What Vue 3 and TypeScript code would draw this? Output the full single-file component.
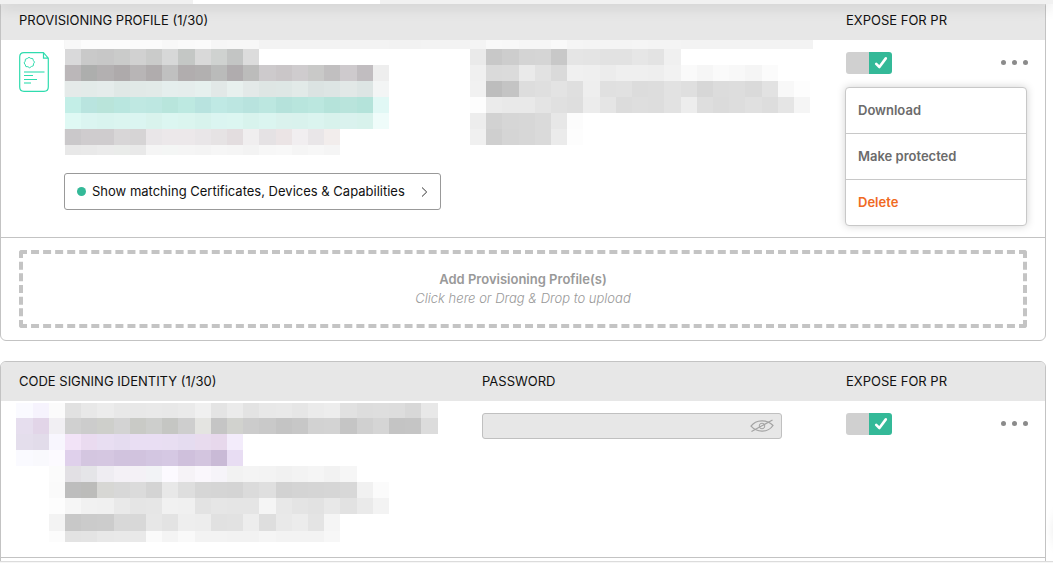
<script setup lang="ts">
import { ref } from 'vue'

interface Tile {
  x: number
  y: number
  w: number
  h: number
  fill: string
}

interface TileRow {
  row: number
  col: number
  fills: string
}

const PITCH = 16.2

// Each entry lists its tile colours from left to right; two-digit codes are greys.
function buildTiles(rows: TileRow[], tops: number[], origin: number): Tile[] {
  const edge = (col: number) => Math.max(0, Math.round(origin + col * PITCH))
  return rows.flatMap(({ row, col, fills }) =>
    fills.split(' ').map((code, n) => {
      const x = edge(col + n)
      return {
        x,
        y: tops[row],
        w: edge(col + n + 1) - x,
        h: tops[row + 1] - tops[row],
        fill: '#' + (code.length === 2 ? code.repeat(3) : code),
      }
    }),
  )
}

const profileTiles = buildTiles(
  [
    { row: 0, col: -1, fills: 'f6 f8 fc fc fc fb fb f8 fa fb f6 f7 f7 f3 f3 f3 f3 f3 f3 f3 f3 f2 f2 f3 f3 f3 f4 f9 f8 f6 f6 f9 f5 f4 f4 f4 f5 f4 f4 f3 f3 f3 f3 f3 f3 f3 f3 f3' },
    { row: 1, col: 0, fills: 'd9d9da c9 c7 cacbca d1 cacbca d7d8d8 c4c7c5 d9 cfd2d0 c3c5c4 dc' },
    { row: 1, col: 25, fills: 'ea c8 cd d4 d5 c8 e5 e4 e2 e2 e6 e3 f0' },
    { row: 2, col: -1, fills: 'f3f5f5 bbb7b9 adaead b3b0b1 aeaaab b8b5b6 b0acad c0 b1adae b2b0b0 babbba b0acae bcbcbb cdcacc cac6c8 cfccce c9c9c8 c1bfc0 cecacd c1bdc0 ee' },
    { row: 2, col: 25, fills: 'f0 da db ea e2 da f0 ef ec ef ef ee f2 fa f6 fa f8 f5 fb' },
    { row: 3, col: -1, fills: 'f4f8f7 e5eae9 e3ebe9 e5eceb e0e8e6 e1e9e7 e2eae8 e5eeed e5edec e6f0ee e2e8e7 e8f0ee e3e9e8 dee6e4 dee7e5 e2eae8 dbe3e2 dde5e4 e2e8e7 dde5e4 f3f5f5' },
    { row: 3, col: 25, fills: 'f1 bd c4 dd df e3 df ee e0 e1 dc dd e2 df d7 dc dd da e2 f8 fd' },
    { row: 4, col: 0, fills: 'c3eee7 b9e4df b9e4da b9e6df bfe8e2 bde7e1 b8e5dc bde9e1 b8e3df bfe9e4 bce6e1 b8e3de bce7e0 b5e2db b8e5dd bbe7df b5e3da b9e4dc b4e3da e1f8f5' },
    { row: 4, col: 25, fills: 'fd eb e9 e9 e4 e0 de ec e5 dc de dd e2 ed de db dd e0 dd e5 f5' },
    { row: 5, col: 0, fills: 'dff9f4 dbf5f1 d9f4ef dbf5f0 dbf5f1 d9f3ed dcf6f1 dbf5ef d8f3ed dbf5f1 dcf6f1 d8f3ed dbf5f0 daf2ed d9f2ed dbf4ef d8f2ec daf2ee d8f2ec effcfa' },
    { row: 5, col: 25, fills: 'ed d2 d6 d7 da e7 fc' },
    { row: 6, col: -1, fills: 'f7f6f6 cac8ca cfccce cfccce d8d6d7 d6d4d5 e9e6e8 ece8ea ece8ea e9e6e8 e6e3e4 e3dddf f0eeef e5e2e4 ebe4e5 f1eef0 e9e6e8 f2edec' },
    { row: 6, col: 25, fills: 'f0 cf d5 d7 da eb fd' },
    { row: 7, col: 0, fills: 'e8 e9 eb eaecea e9 f5 f4f6f5 f5 f4 f6 f5 f3 f7 f8 f5 f7 f5' },
  ],
  [0, 9, 25, 41, 57, 73, 89, 105, 115],
  1,
)

const identityTiles = buildTiles(
  [
    { row: 0, col: 0, fills: 'fafaff f6f3fd fb e1 e8 ec e8 e8 e9 e8 ea f0 e4 eb e3 e8 e9 e6 eb ed e1 dd de dd d8 e8' },
    { row: 1, col: 0, fills: 'e6deee e2d5e8 f1eff3 d0 cc cecfcb d3 c9cac6 cdcecc c5c6c3 ce e4e4e1 c5 d1d2ce cc c9 c4 c7 d2 d3 c5 d0 d5 c4 c5 dc' },
    { row: 2, col: 0, fills: 'e4deec e2dcea f8f6fe f2e3f7 eadbf0 e8def2 e5dcf0 e9def3 e9def3 e8def2 e5dcf0 e8dbee e7d8ec f3ecfb' },
    { row: 3, col: 0, fills: 'fafaff f9f9fd fcfaff dfd0eb d4c6e0 d5c7e1 d1c3de d1c3de d3c6e1 d5c8e3 cfc0dc d3c5df c9bad6 e8ddf3' },
    { row: 4, col: 2, fills: 'fb e2e0e4 e5e5e8 efedf2 f4f1f6 f4f1f6 f2f3f6 fcfaff f6f3f7 faf7fc f6f4f9 f2 f4 f3 f1 f3 f5 f2 f6' },
    { row: 5, col: 2, fills: 'fa bd bcbcba d7d7d4 d8 db d4 e8 de d6 d5 d4 db df d2 d4 d5 d6 d8 f1 fb' },
    { row: 6, col: 2, fills: 'fd f6 f1 f0 e9 e5 e6 f1 f0 e3 e6 e5 e5 f5 e8 e4 e2 e8 e2 ea f3' },
    { row: 7, col: 2, fills: 'f3 c8 cb cc d8 d8 e7 e3 ee ed e1 e2 ed de e9 ec e4 f5' },
    { row: 8, col: 2, fills: 'fc e3 e4 e8 e9 e9 fa f4 f9 f3 f3 f2 f2 f5 f3 f3 f3 f7' },
  ],
  [0, 15, 31, 47, 63, 79, 95, 111, 128, 139],
  0.4,
)

const exposeProfile = ref(true)
const exposeIdentity = ref(true)
const password = ref('')
</script>

<template>
  <div class="page">
    <div class="topbar"><span class="tab"></span></div>

    <main>
      <section class="card">
        <table>
          <colgroup>
            <col /><col class="mid" /><col class="expose" /><col class="actions" />
          </colgroup>
          <thead>
            <tr>
              <th scope="col" colspan="2">PROVISIONING PROFILE (1/30)</th>
              <th scope="col" colspan="2">EXPOSE FOR PR</th>
            </tr>
          </thead>
          <tbody>
            <tr class="profile-row">
              <td colspan="2">
                <div class="profile">
                  <svg class="doc" width="30" height="40" viewBox="0 0 30 40" fill="none" stroke="#2fdcae" aria-hidden="true">
                    <path d="M24.5.7H5Q.7.7.7 5V35Q.7 39.3 5 39.3H25Q29.3 39.3 29.3 35V6.2L24.5.7V6.2H29.3" stroke-width="1.2" />
                    <path d="M10 5.3l1.7 1.1 2 .1.6 1.9 1.2 1.7-1 1.7-.2 2-1.9.7-1.7 1.3-1.8-1.1-2-.1-.7-1.9-1.1-1.8 1.1-1.7.2-2 1.9-.7z" />
                    <path d="M5 20H25.5" stroke-width="2" stroke-opacity=".55" />
                    <path d="M5 23.5H14M5 27.5H18" />
                    <path d="M5 31H12" stroke-width="2" stroke-opacity=".55" />
                  </svg>
                  <div class="details">
                    <svg class="mosaic" width="749" height="115" shape-rendering="crispEdges" aria-hidden="true">
                      <rect v-for="(t, i) in profileTiles" :key="i" :x="t.x" :y="t.y" :width="t.w" :height="t.h" :fill="t.fill" />
                    </svg>
                    <button type="button" class="matching">
                      <span class="status"></span>
                      Show matching Certificates, Devices &amp; Capabilities
                      <svg width="7" height="12" viewBox="0 0 7 12" fill="none" stroke="#333" aria-hidden="true">
                        <path d="M1 1.5 5.7 6 1 10.5" />
                      </svg>
                    </button>
                  </div>
                </div>
              </td>
              <td>
                <label class="toggle">
                  <input v-model="exposeProfile" type="checkbox" aria-label="Expose for PR" />
                  <svg v-if="exposeProfile" width="14" height="14" viewBox="0 0 14 14" fill="none" stroke="#fff" stroke-width="2.6" aria-hidden="true">
                    <path d="M2.2 7.8 5.4 11 11.8 2.4" stroke-linecap="round" stroke-linejoin="round" />
                  </svg>
                </label>
              </td>
              <td class="more-cell">
                <button type="button" class="more" aria-label="More actions" aria-expanded="true">
                  <i></i><i></i><i></i>
                </button>
                <div class="menu" role="menu">
                  <button type="button" role="menuitem">Download</button>
                  <button type="button" role="menuitem">Make protected</button>
                  <button type="button" role="menuitem" class="danger">Delete</button>
                </div>
              </td>
            </tr>
          </tbody>
        </table>
        <div class="upload">
          <button type="button" class="dropzone">
            <strong>Add Provisioning Profile(s)</strong>
            <em>Click here or Drag &amp; Drop to upload</em>
          </button>
        </div>
      </section>

      <section class="card">
        <table>
          <colgroup>
            <col /><col class="mid" /><col class="expose" /><col class="actions" />
          </colgroup>
          <thead>
            <tr>
              <th scope="col">CODE SIGNING IDENTITY (1/30)</th>
              <th scope="col"><label for="identity-password">PASSWORD</label></th>
              <th scope="col" colspan="2">EXPOSE FOR PR</th>
            </tr>
          </thead>
          <tbody>
            <tr class="identity-row">
              <td class="identity">
                <svg class="mosaic" width="422" height="139" shape-rendering="crispEdges" aria-hidden="true">
                  <rect v-for="(t, i) in identityTiles" :key="i" :x="t.x" :y="t.y" :width="t.w" :height="t.h" :fill="t.fill" />
                </svg>
              </td>
              <td>
                <div class="password">
                  <input id="identity-password" v-model="password" type="password" />
                  <button type="button" aria-label="Show password">
                    <svg width="24" height="14" viewBox="0 0 24 14" fill="none" stroke="#a3a3a3" stroke-width="1.2" aria-hidden="true">
                      <path d="M1 7.2C6 .2 17 .2 23 6.5C18 13.8 7 13.8 1 7.2Z" />
                      <circle cx="12" cy="7" r="2.8" stroke-width="1" />
                      <path d="M1.5 12.5 22.5 1" />
                    </svg>
                  </button>
                </div>
              </td>
              <td>
                <label class="toggle">
                  <input v-model="exposeIdentity" type="checkbox" aria-label="Expose for PR" />
                  <svg v-if="exposeIdentity" width="14" height="14" viewBox="0 0 14 14" fill="none" stroke="#fff" stroke-width="2.6" aria-hidden="true">
                    <path d="M2.2 7.8 5.4 11 11.8 2.4" stroke-linecap="round" stroke-linejoin="round" />
                  </svg>
                </label>
              </td>
              <td class="more-cell">
                <button type="button" class="more" aria-label="More actions">
                  <i></i><i></i><i></i>
                </button>
              </td>
            </tr>
          </tbody>
        </table>
        <div class="upload next"></div>
      </section>
    </main>

    <div class="bubble"></div>
    <div class="bottombar"></div>
  </div>
</template>

<style>
body {
  background: #fff;
}
</style>

<style scoped>
.page {
  height: 100vh;
  overflow: hidden;
  position: relative;
  font-family: Inter, "Liberation Sans", sans-serif;
  font-size: 13px;
  line-height: 19px;
  color: #111;
}
.page * {
  box-sizing: border-box;
}
button {
  font: inherit;
  color: inherit;
  background: none;
  border: 0;
  padding: 0;
  cursor: pointer;
}
.topbar {
  position: absolute;
  z-index: 3;
  top: 0;
  left: 0;
  right: 0;
  height: 4px;
  padding-left: 193px;
  background: #f1f1f1;
  box-shadow: 0 0 16px rgba(0, 0, 0, 0.3);
}
.tab {
  display: block;
  width: 187px;
  height: 4px;
  background: #fff;
}
main {
  display: flex;
  flex-direction: column;
  gap: 20px;
  padding-right: 7px;
}
.card {
  border: 1px solid #c3c3c3;
  border-radius: 6px;
}
table {
  width: 100%;
  table-layout: fixed;
  border-collapse: separate;
  border-spacing: 0;
}
.mid {
  width: 364px;
}
.expose {
  width: 135px;
}
.actions {
  width: 82px;
}
th {
  height: 39px;
  padding: 0 0 0 18px;
  background: #e7e7e7;
  font-weight: 400;
  text-align: left;
}
th:first-child {
  border-top-left-radius: 5px;
}
th:last-child {
  border-top-right-radius: 5px;
}
td {
  padding: 12px 0 0 18px;
  vertical-align: top;
}
.profile-row td {
  height: 197px;
}
.identity-row td {
  height: 156px;
}
.profile-row td:first-child {
  padding-top: 0;
}
.profile {
  display: flex;
  gap: 15px;
}
.doc {
  flex: none;
  margin-top: 12px;
}
.details {
  display: flex;
  flex-direction: column;
  align-items: flex-start;
  gap: 18px;
  min-width: 0;
}
.mosaic {
  display: block;
}
.matching {
  display: flex;
  align-items: center;
  gap: 6px;
  min-width: 377px;
  height: 37px;
  padding: 0 12px;
  border: 1px solid #999;
  border-radius: 3px;
  background: #fff;
  white-space: nowrap;
}
.matching svg {
  margin-left: auto;
}
.status {
  width: 9px;
  height: 9px;
  border-radius: 50%;
  background: #34b998;
}
.toggle {
  display: block;
  position: relative;
  width: 46px;
  height: 22px;
}
.toggle input {
  appearance: none;
  display: block;
  width: 46px;
  height: 22px;
  margin: 0;
  border-radius: 3px;
  background: linear-gradient(to right, #34b998 50%, #d0d0d0 50%);
}
.toggle input:checked {
  background: linear-gradient(to right, #d0d0d0 50%, #34b998 50%);
}
.toggle svg {
  position: absolute;
  right: 4px;
  top: 4px;
  pointer-events: none;
}
.more-cell {
  position: relative;
  padding-right: 17px;
}
.more {
  display: flex;
  align-items: center;
  gap: 6px;
  height: 21px;
  margin-left: auto;
}
.more i {
  width: 5px;
  height: 5px;
  border-radius: 50%;
  background: #8b8b8b;
}
.menu {
  position: absolute;
  z-index: 2;
  top: 47px;
  right: 18px;
  width: 182px;
  border: 1px solid #c8c8c8;
  border-radius: 4px;
  background: #fff;
  box-shadow: 0 0 8px rgba(0, 0, 0, 0.18);
}
.menu button {
  display: block;
  width: 100%;
  height: 45px;
  padding: 0 12px;
  text-align: left;
  font-weight: 600;
  color: #6b6b6b;
}
.menu button + button {
  height: 46px;
  border-top: 1px solid #c8c8c8;
}
.menu .danger {
  color: #f06a22;
}
.upload {
  padding: 12px 18px;
  border-top: 1px solid #c3c3c3;
}
.next {
  min-height: 60px;
}
.dropzone {
  display: flex;
  flex-direction: column;
  align-items: center;
  justify-content: center;
  width: 100%;
  height: 78px;
  border: 4px dashed #c4c4c4;
  border-radius: 3px;
  color: #999;
}
.dropzone strong {
  font-weight: 600;
}
.dropzone em {
  font-weight: 300;
}
.identity-row .identity {
  padding: 2px 0 0 15px;
}
.password {
  display: flex;
  align-items: center;
  width: 300px;
  height: 26px;
  padding-right: 7px;
  border: 1px solid #c0c0c0;
  border-radius: 3px;
  background: #e7e7e7;
}
.password input {
  flex: 1;
  min-width: 0;
  height: 24px;
  padding: 0 8px;
  border: 0;
  outline: 0;
  background: transparent;
  font: inherit;
}
.password button {
  display: flex;
}
.bubble {
  position: absolute;
  right: -60px;
  bottom: 4px;
  width: 58px;
  height: 58px;
  border-radius: 50%;
  box-shadow: 0 0 12px rgba(0, 0, 0, 0.12);
}
.bottombar {
  position: absolute;
  z-index: 3;
  left: 0;
  right: 0;
  bottom: 0;
  height: 2px;
  border-top: 1px solid #dcdcdc;
  background: #f6f6f6;
}
</style>
